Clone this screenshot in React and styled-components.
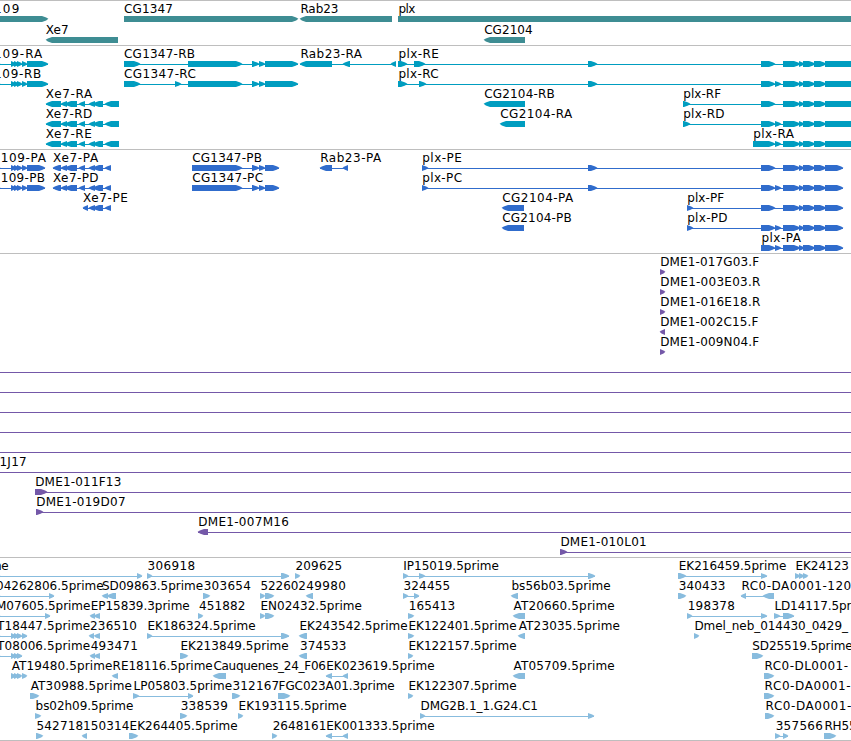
import React from "react";
import styled, { createGlobalStyle } from "styled-components";

const VIEW_WIDTH = 851;
const HEAD = 6;
const FONT = '12px "DejaVu Sans", sans-serif';

const GlobalStyle = createGlobalStyle`
  body {
    margin: 0;
    background: #ffffff;
    overflow: hidden;
  }
`;

const Browser = styled.main`
  display: flex;
  flex-direction: column;
  width: ${VIEW_WIDTH}px;
  height: 741px;
  box-sizing: border-box;
  overflow: hidden;
  background: #ffffff;
  border-top: 1px solid #bebebe;
`;

const TrackPanel = styled.section`
  display: flex;
  flex-direction: column;
  flex: none;
  box-sizing: border-box;
  height: ${(p) => p.$height}px;
  padding-top: 1px;
  border-bottom: 1px solid #bebebe;
  color: ${(p) => p.$color};
`;

const Lane = styled.div`
  position: relative;
  flex: none;
  height: ${(p) => p.$height}px;
`;

const LaneDrawing = styled.svg`
  display: block;
  width: ${VIEW_WIDTH}px;
  height: 20px;
`;

const FeatureLabel = styled.span`
  position: absolute;
  top: -1px;
  height: 16px;
  color: #000000;
  font: ${FONT};
  line-height: 16px;
  white-space: pre;
`;

// Stemmed capitals carry a wider side bearing than round ones.
function bearingShift(text) {
  if (/^[DEFIPRLBpb]/.test(text)) return 0.7;
  if (/^[CG]/.test(text)) return -0.5;
  return 0;
}

let context;
function fitLabel(text, x0, x1) {
  if (!context) {
    context = document.createElement("canvas").getContext("2d");
    context.font = FONT;
  }
  const m = context.measureText(text);
  const ink = m.actualBoundingBoxRight + m.actualBoundingBoxLeft;
  const shift = bearingShift(text);
  return {
    left: x0 + shift + m.actualBoundingBoxLeft,
    letterSpacing: (x1 - x0 - shift - ink) / Math.max(1, text.length - 1),
  };
}

// Feature: [label, label start, label end, strand, exons, baseline span]
const f = (label, x0, x1, strand, exons, span) => ({ label, x0, x1, strand, exons, span });
const spanOf = (exons) => [exons[0][0], exons[exons.length - 1][1]];
const linked = (label, x0, x1, strand, exons) => f(label, x0, x1, strand, exons, spanOf(exons));

const startExons = [[-5, 0], [11, 16], [14, 19], [17, 22], [22, 27]];
const xe7Mid = [[61, 67], [65, 77], [79, 85], [89, 95], [93, 103]];
const plxMid = [[783, 800], [799, 804], [803, 815], [814, 826]];
const plxR = [[761, 775], ...plxMid, [825, 862]];
const plxRLong = [[761, 775], [775, 781], ...plxMid, [825, 862]];
const plxP = [[761, 775], ...plxMid, [825, 843]];
const plxPLong = [[761, 775], [775, 781], ...plxMid, [825, 843]];
const cgTail = [[188, 242], [252, 259], [259, 265]];
const xe7R = [[46, 61], ...xe7Mid, [105, 119]];
const xe7P = [[53, 61], ...xe7Mid, [105, 111]];
const through = () => f("", 0, 0, 1, [], [0, VIEW_WIDTH]);

const tracks = [
  {
    name: "genes", color: "#3e8d93", height: 45, lane: 21,
    lanes: [
      [
        f("109", -5, 18.7, 1, [[-10, 48]]),
        f("CG1347", 124.5, 172.3, 1, [[124, 298]]),
        f("Rab23", 300.7, 337.7, -1, [[300, 392]]),
        f("plx", 398.7, 415.3, 1, [[398, 870]]),
      ],
      [
        f("Xe7", 45.8, 68, -1, [[46, 118]]),
        f("CG2104", 484.7, 532, -1, [[484, 525]]),
      ],
    ],
  },
  {
    name: "transcripts", color: "#009dc0", height: 104, lane: 20,
    lanes: [
      [
        linked("109-RA", -5, 43, 1, [...startExons, [27, 48]]),
        linked("CG1347-RB", 124.5, 194.7, 1, [[124, 140], ...cgTail, [265, 298]]),
        linked("Rab23-RA", 300.7, 362.7, -1, [[300, 332], [343, 350], [391, 396]]),
        linked("plx-RE", 398.7, 438.3, 1, [[398, 407], [414, 425], [588, 597], ...plxR]),
      ],
      [
        linked("109-RB", -5, 41, 1, [...startExons, [27, 48]]),
        linked("CG1347-RC", 124.5, 195.5, 1, [[124, 140], [175, 181], ...cgTail, [265, 298]]),
        linked("plx-RC", 398.7, 438.3, 1, [[398, 407], [419, 426], [588, 597], ...plxRLong]),
      ],
      [
        linked("Xe7-RA", 45.8, 93, -1, xe7R),
        f("CG2104-RB", 484.7, 554.5, -1, [[484, 525]]),
        linked("plx-RF", 683.5, 721.3, 1, [[683, 690], ...plxR]),
      ],
      [
        linked("Xe7-RD", 45.8, 92, -1, xe7R),
        f("CG2104-RA", 500.7, 573, -1, [[500, 525]]),
        linked("plx-RD", 683.5, 724.3, 1, [[683, 690], ...plxRLong]),
      ],
      [
        linked("Xe7-RE", 45.8, 91.3, -1, xe7R),
        linked("plx-RA", 753.5, 794.7, 1, [[753, 775], ...plxRLong.slice(1)]),
      ],
    ],
  },
  {
    name: "proteins", color: "#306ccc", height: 104, lane: 20,
    lanes: [
      [
        linked("109-PA", 1.7, 46.7, 1, [...startExons, [27, 45]]),
        linked("Xe7-PA", 53, 99, -1, xe7P),
        linked("CG1347-PB", 192.7, 261.7, 1, [[192, 242], [252, 259], [259, 265], [265, 279]]),
        linked("Rab23-PA", 320.5, 382, -1, [[320, 332], [343, 348]]),
        linked("plx-PE", 422.5, 461.3, 1, [[422, 428], [588, 597], ...plxP]),
      ],
      [
        linked("109-PB", 1.7, 44.7, 1, [...startExons, [27, 45]]),
        linked("Xe7-PD", 53, 98.3, -1, xe7P),
        linked("CG1347-PC", 192.7, 262.7, 1, [[192, 242], [252, 259], [259, 265], [265, 279]]),
        linked("plx-PC", 422.5, 461.7, 1, [[422, 428], [588, 597], ...plxPLong]),
      ],
      [
        linked("Xe7-PE", 83, 127.3, -1, [[83, 88], [89, 95], [93, 103], [105, 111]]),
        f("CG2104-PA", 502.7, 574, -1, [[502, 524]]),
        linked("plx-PF", 687.5, 724.3, 1, [[687, 693], ...plxP]),
      ],
      [
        f("CG2104-PB", 502.7, 571.5, -1, [[502, 524]]),
        linked("plx-PD", 687.5, 727.3, 1, [[687, 693], ...plxPLong]),
      ],
      [linked("plx-PA", 761.7, 801.7, 1, plxPLong)],
    ],
  },
  {
    name: "clones", color: "#7458a8", height: 304, lane: 20,
    lanes: [
      [f("DME1-017G03.F", 660.5, 759.3, 1, [[660, 665]])],
      [f("DME1-003E03.R", 660.5, 760, 1, [[660, 665]])],
      [f("DME1-016E18.R", 660.5, 760, 1, [[660, 665]])],
      [f("DME1-002C15.F", 660.5, 758.5, -1, [[660, 665]])],
      [f("DME1-009N04.F", 660.5, 759.3, 1, [[660, 665]])],
      [through()],
      [through()],
      [through()],
      [through()],
      [through()],
      [f("1J17", 0.5, 26, 1, [], [0, VIEW_WIDTH])],
      [f("DME1-011F13", 35.5, 120.7, 1, [[35, 47]], [35, VIEW_WIDTH])],
      [f("DME1-019D07", 36.5, 125, 1, [[36, 43]], [36, VIEW_WIDTH])],
      [f("DME1-007M16", 198.5, 288.3, -1, [[198, 208]], [198, VIEW_WIDTH])],
      [f("DME1-010L01", 560.7, 646, 1, [[560, 567]], [560, VIEW_WIDTH])],
    ],
  },
  {
    name: "ests", color: "#88bcde", height: 183, lane: 20,
    lanes: [
      [
        linked("prime", -24.5, 8.3, 1, [[-5, 0], [137, 142]]),
        linked("306918", 147.5, 194.5, 1, [[147, 152], [281, 289]]),
        f("209625", 295.5, 341.5, 1, [[295, 300]]),
        linked("IP15019.5prime", 403.5, 498.5, 1, [[403, 408], [419, 425], [588, 595]]),
        linked("EK216459.5prime", 679, 786, 1, [[678, 686], [761, 767]]),
        f("EK24123", 795.7, 848.3, 1, [[795, 800], [799, 804], [803, 808]]),
      ],
      [
        linked("04262806.5prime", -4, 103.3, 1, [[-5, 0], [49, 54]]),
        f("SD09863.5prime", 101.9, 202.7, -1, [[102, 108], [107, 116]]),
        f("303654", 203.7, 250.3, 1, [[203, 210]]),
        f("522602", 260.5, 305.3, 1, [[260, 265], [265, 274]]),
        f("49980", 306.3, 345.3, -1, [[306, 313]]),
        linked("324455", 403.5, 449.5, 1, [[403, 408], [414, 419]]),
        f("bs56b03.5prime", 511.7, 610.3, -1, [[511, 518]]),
        f("340433", 678.7, 724.7, 1, [[678, 686]]),
        linked("RC0-DA0001-120", 741.7, 850.6, -1, [[741, 746], [763, 774]]),
      ],
      [
        linked("M07605.5prime", -3, 90, 1, [[-5, 0], [45, 50]]),
        f("EP15839.3prime", 91, 189.3, -1, [[90, 95], [94, 100]]),
        f("451882", 199, 244.7, 1, [[198, 203]]),
        f("EN02432.5prime", 260.7, 361.5, 1, [[260, 265], [265, 274]]),
        f("165413", 409.7, 454.5, 1, [[408, 414]]),
        f("AT20660.5prime", 513.5, 614.3, -1, [[513, 525]]),
        linked("198378", 688.7, 734.3, 1, [[687, 692], [761, 767]]),
        linked("LD14117.5pr", 774.7, 851.5, 1, [[774, 780], [783, 794]]),
      ],
      [
        linked("T18447.5prime", -4, 89.7, 1, startExons),
        f("236510", 89.9, 136.3, -1, [[89, 94], [94, 100]]),
        linked("EK186324.5prime", 147.7, 255.3, 1, [[147, 152], [281, 289]]),
        f("EK243542.5prime", 299.7, 407.3, -1, [[299, 307]]),
        f("EK122401.5prime", 408.7, 516.3, 1, [[408, 414]]),
        f("AT23035.5prime", 518.7, 619.5, -1, [[518, 525]]),
        f("Dmel_neb_014430_0429_", 694.7, 849, 1, [[694, 699]]),
      ],
      [
        linked("T08006.5prime", -4, 89.7, 1, startExons.slice(0, 4)),
        f("493471", 90.7, 137.3, -1, [[90, 95], [94, 100]]),
        f("EK213849.5prime", 180.7, 288.3, 1, [[180, 188]]),
        f("374533", 299.9, 345.7, -1, [[299, 307]]),
        f("EK122157.5prime", 408.7, 516.3, 1, [[408, 413]]),
        f("SD25519.5prime", 752.3, 852.3, 1, [[752, 763]]),
      ],
      [
        f("AT19480.5prime", 11.7, 112, 1, startExons.slice(1)),
        f("RE18116.5prime", 112.9, 212.3, -1, [[112, 118]]),
        f("Cauquenes_24_F06", 213.9, 325.3, -1, [[213, 226]]),
        linked("EK023619.5prime", 326.5, 434.3, -1, [[326, 332], [343, 348]]),
        f("AT05709.5prime", 513.5, 614.3, -1, [[513, 525]]),
        f("RC0-DL0001-", 764.9, 847.7, 1, [[764, 774]]),
      ],
      [
        f("AT30988.5prime", 30.7, 131.5, 1, [[30, 39]]),
        linked("LP05803.5prime", 133.9, 231.7, 1, [[133, 139], [188, 193]]),
        f("312167", 232.5, 278.5, 1, [[232, 240]]),
        f("FGC023A01.3prime", 278.9, 394.3, 1, [[278, 290]]),
        f("EK122307.5prime", 408.7, 516.3, 1, [[408, 413]]),
        f("RC0-DA0001-", 764.9, 850.3, 1, [[764, 774]]),
      ],
      [
        f("bs02h09.5prime", 35.9, 133, 1, [[35, 41]]),
        f("338539", 180.7, 227.3, 1, [[180, 187]]),
        f("EK193115.5prime", 238.9, 346.3, 1, [[238, 243]]),
        linked("DMG2B.1_1.G24.C1", 420.9, 537.3, 1, [[420, 425], [588, 594]]),
        f("RC0-DA0001-", 765.9, 851, 1, [[765, 774]]),
      ],
      [
        f("542718", 36.5, 82.5, 1, [[36, 43]]),
        f("150314", 83.9, 128.7, -1, [[82, 87]]),
        f("EK264405.5prime", 129.9, 237.3, 1, [[129, 138]]),
        f("2648161", 272.7, 325.7, 1, [[272, 277]]),
        linked("EK001333.5prime", 326.5, 434.3, -1, [[326, 332], [343, 348]]),
        linked("357566", 775.7, 822.3, 1, [[775, 780], [783, 788]]),
        f("RH55", 824.7, 856, 1, [[824, 836]]),
      ],
    ],
  },
];

// An exon is a bar that narrows in a rounded head towards its strand's end.
function exonPoints([start, end], strand) {
  const head = Math.min(HEAD, end - start);
  const tip = strand < 0 ? start : end;
  const tail = strand < 0 ? end : start;
  const neck = tip - strand * head;
  const shoulder = tip - strand * head * 0.3;
  return [
    [tail, 14],
    [neck, 14],
    [shoulder, 15.6],
    [tip + strand * 0.4, 16.8],
    [shoulder, 18.4],
    [neck, 20],
    [tail, 20],
  ]
    .map((point) => point.join(","))
    .join(" ");
}

function FeatureGlyph({ feature }) {
  const { span, exons, strand } = feature;
  return (
    <g>
      {span && <rect x={span[0]} y="17" width={span[1] - span[0]} height="1" />}
      {exons.map((exon, i) => (
        <polygon key={i} points={exonPoints(exon, strand)} />
      ))}
    </g>
  );
}

function Track({ track }) {
  return (
    <TrackPanel $height={track.height} $color={track.color} aria-label={track.name}>
      {track.lanes.map((features, i) => (
        <Lane key={i} $height={track.lane}>
          <LaneDrawing viewBox="0 0 851 20" fill="currentColor" aria-hidden="true">
            {features.map((feature, j) => (
              <FeatureGlyph key={j} feature={feature} />
            ))}
          </LaneDrawing>
          {features
            .filter((feature) => feature.label)
            .map((feature, j) => (
              <FeatureLabel key={j} style={fitLabel(feature.label, feature.x0, feature.x1)}>
                {feature.label}
              </FeatureLabel>
            ))}
        </Lane>
      ))}
    </TrackPanel>
  );
}

export default function App() {
  return (
    <>
      <GlobalStyle />
      <Browser>
        {tracks.map((track) => (
          <Track key={track.name} track={track} />
        ))}
      </Browser>
    </>
  );
}
